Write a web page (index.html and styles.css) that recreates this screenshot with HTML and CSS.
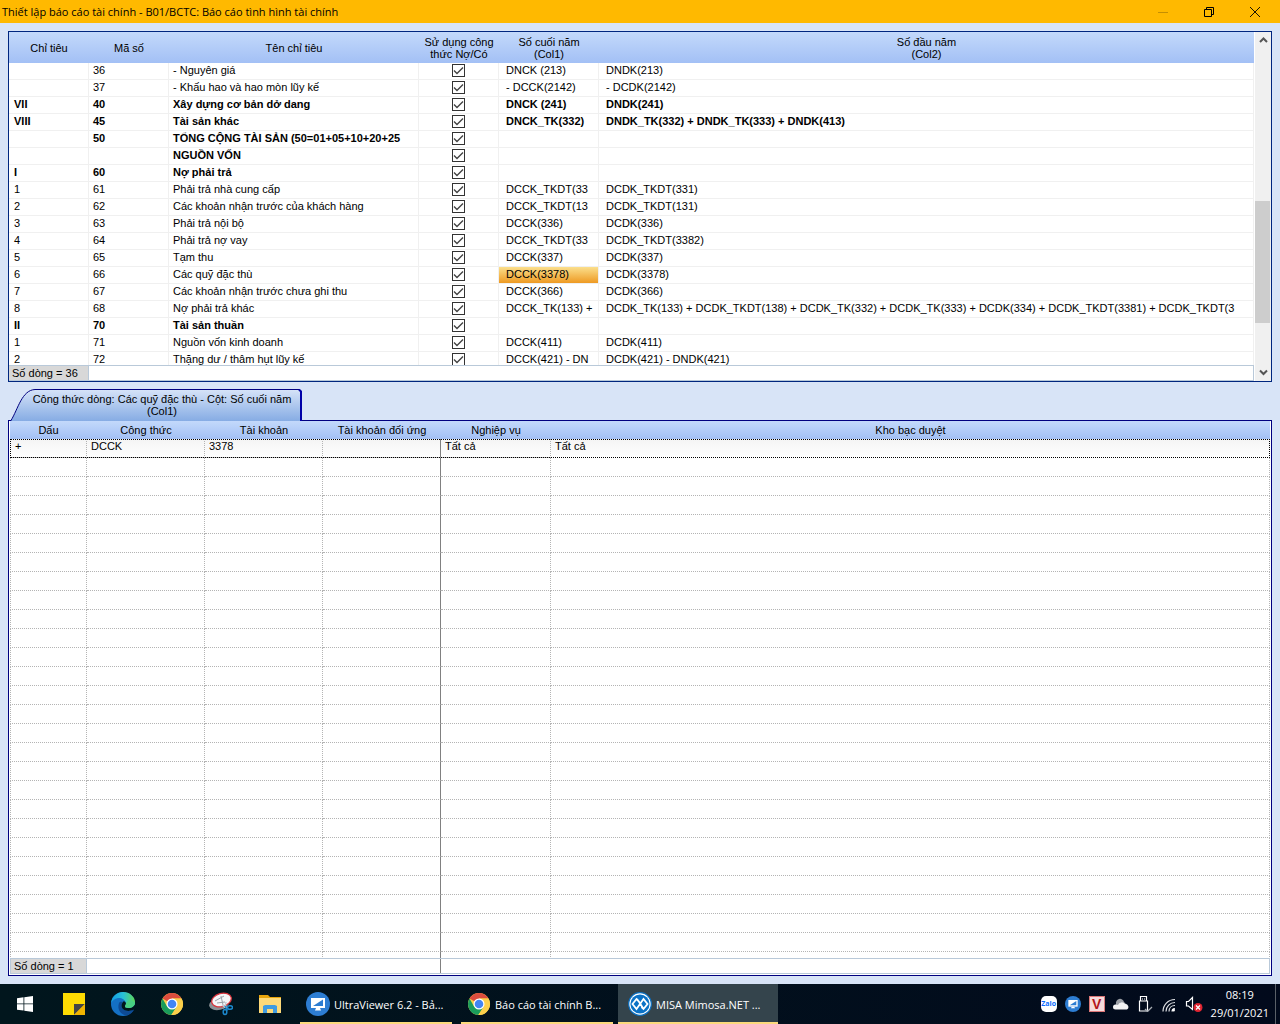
FILE: index.html
```html
<!DOCTYPE html>
<html lang="vi">
<head>
  <meta charset="UTF-8">
  <meta name="viewport" content="width=device-width, initial-scale=1.0">
  <title>Thiết lập báo cáo tài chính</title>
  <link rel="stylesheet" href="styles.css">
</head>
<body>
  <!-- Title bar -->
  <header class="titlebar">
    <h1>Thiết lập báo cáo tài chính - B01/BCTC: Báo cáo tình hình tài chính</h1>
    <div class="window-buttons">
      <button type="button" aria-label="Thu nhỏ" disabled><svg width="12" height="12" viewBox="0 0 12 12"><path d="M1 6.500h10" stroke="#c58f02"/></svg></button>
      <button type="button" aria-label="Khôi phục"><svg width="12" height="12" viewBox="0 0 12 12"><path d="M1.500 3.500h7v7h-7zM3.500 3.500v-2h7v7h-2" fill="none" stroke="#000"/></svg></button>
      <button type="button" aria-label="Đóng"><svg width="12" height="12" viewBox="0 0 12 12"><path d="M1 1l10 10M11 1L1 11" stroke="#000" stroke-width=".9"/></svg></button>
    </div>
  </header>

  <main class="workspace">
    <!-- Report lines -->
    <section class="panel lines-panel">
      <div class="lines-main">
        <div class="table-wrap">
          <table class="lines">
            <colgroup>
              <col class="c-index"><col class="c-code"><col class="c-name"><col class="c-check"><col class="c-col1"><col>
            </colgroup>
            <thead>
              <tr>
                <th>Chỉ tiêu</th>
                <th>Mã số</th>
                <th>Tên chỉ tiêu</th>
                <th>Sử dụng công<br>thức Nợ/Có</th>
                <th>Số cuối năm<br>(Col1)</th>
                <th>Số đầu năm<br>(Col2)</th>
              </tr>
            </thead>
            <tbody>
              <tr><td></td><td>36</td><td>- Nguyên giá</td><td><input type="checkbox" aria-label="36" checked></td><td>DNCK (213)</td><td>DNDK(213)</td></tr>
              <tr><td></td><td>37</td><td>- Khấu hao và hao mòn lũy kế</td><td><input type="checkbox" aria-label="37" checked></td><td>- DCCK(2142)</td><td>- DCDK(2142)</td></tr>
              <tr class="group"><td>VII</td><td>40</td><td>Xây dựng cơ bản dở dang</td><td><input type="checkbox" aria-label="40" checked></td><td>DNCK (241)</td><td>DNDK(241)</td></tr>
              <tr class="group"><td>VIII</td><td>45</td><td>Tài sản khác</td><td><input type="checkbox" aria-label="45" checked></td><td>DNCK_TK(332)</td><td>DNDK_TK(332) + DNDK_TK(333) + DNDK(413)</td></tr>
              <tr class="group"><td></td><td>50</td><td>TỔNG CỘNG TÀI SẢN (50=01+05+10+20+25</td><td><input type="checkbox" aria-label="50" checked></td><td></td><td></td></tr>
              <tr class="group"><td></td><td></td><td>NGUỒN VỐN</td><td><input type="checkbox" aria-label="Nguồn vốn" checked></td><td></td><td></td></tr>
              <tr class="group"><td>I</td><td>60</td><td>Nợ phải trả</td><td><input type="checkbox" aria-label="60" checked></td><td></td><td></td></tr>
              <tr><td>1</td><td>61</td><td>Phải trả nhà cung cấp</td><td><input type="checkbox" aria-label="61" checked></td><td>DCCK_TKDT(33</td><td>DCDK_TKDT(331)</td></tr>
              <tr><td>2</td><td>62</td><td>Các khoản nhận trước của khách hàng</td><td><input type="checkbox" aria-label="62" checked></td><td>DCCK_TKDT(13</td><td>DCDK_TKDT(131)</td></tr>
              <tr><td>3</td><td>63</td><td>Phải trả nội bộ</td><td><input type="checkbox" aria-label="63" checked></td><td>DCCK(336)</td><td>DCDK(336)</td></tr>
              <tr><td>4</td><td>64</td><td>Phải trả nợ vay</td><td><input type="checkbox" aria-label="64" checked></td><td>DCCK_TKDT(33</td><td>DCDK_TKDT(3382)</td></tr>
              <tr><td>5</td><td>65</td><td>Tạm thu</td><td><input type="checkbox" aria-label="65" checked></td><td>DCCK(337)</td><td>DCDK(337)</td></tr>
              <tr><td>6</td><td>66</td><td>Các quỹ đặc thù</td><td><input type="checkbox" aria-label="66" checked></td><td class="selected">DCCK(3378)</td><td>DCDK(3378)</td></tr>
              <tr><td>7</td><td>67</td><td>Các khoản nhận trước chưa ghi thu</td><td><input type="checkbox" aria-label="67" checked></td><td>DCCK(366)</td><td>DCDK(366)</td></tr>
              <tr><td>8</td><td>68</td><td>Nợ phải trả khác</td><td><input type="checkbox" aria-label="68" checked></td><td>DCCK_TK(133) +</td><td>DCDK_TK(133) + DCDK_TKDT(138) + DCDK_TK(332) + DCDK_TK(333) + DCDK(334) + DCDK_TKDT(3381) + DCDK_TKDT(3</td></tr>
              <tr class="group"><td>II</td><td>70</td><td>Tài sản thuần</td><td><input type="checkbox" aria-label="70" checked></td><td></td><td></td></tr>
              <tr><td>1</td><td>71</td><td>Nguồn vốn kinh doanh</td><td><input type="checkbox" aria-label="71" checked></td><td>DCCK(411)</td><td>DCDK(411)</td></tr>
              <tr><td>2</td><td>72</td><td>Thặng dư / thâm hụt lũy kế</td><td><input type="checkbox" aria-label="72" checked></td><td>DCCK(421) - DN</td><td>DCDK(421) - DNDK(421)</td></tr>
            </tbody>
          </table>
        </div>
        <div class="summary"><span>Số dòng = 36</span></div>
      </div>
      <div class="scrollbar">
        <button type="button" aria-label="Lên"><svg width="9" height="7" viewBox="0 0 9 7"><path d="M1 5l3.500-3.500L8 5" fill="none" stroke="#555" stroke-width="2"/></svg></button>
        <div class="track-before"></div>
        <div class="thumb"></div>
        <div class="track-after"></div>
        <button type="button" aria-label="Xuống"><svg width="9" height="7" viewBox="0 0 9 7"><path d="M1 1.500L4.500 5 8 1.500" fill="none" stroke="#555" stroke-width="2"/></svg></button>
      </div>
    </section>

    <!-- Formula details for the selected cell -->
    <button type="button" class="tab">
      <svg class="tab-shape" width="292" height="32" viewBox="0 0 292 32">
        <defs>
          <linearGradient id="tabFill" x1="0" y1="0" x2="0" y2="1">
            <stop offset="0" stop-color="#d6e3f8"/>
            <stop offset="1" stop-color="#86ace4"/>
          </linearGradient>
        </defs>
        <path d="M1 32C8 20 12 1 25 .500H289L291.500 3V32z" fill="url(#tabFill)"/>
        <path d="M1 31.500C8 20 12 1 25 .500H289.500" fill="none" stroke="#000080"/>
        <path d="M289 .500L291 2.500V32" fill="none" stroke="#0000a8" stroke-width="2"/>
      </svg>
      <span>Công thức dòng: Các quỹ đặc thù - Cột: Số cuối năm<br>(Col1)</span>
    </button>
    <section class="panel formula-panel">
      <div class="table-wrap">
        <table class="formula">
          <colgroup>
            <col class="c-sign"><col class="c-acc"><col class="c-acc"><col class="c-acc"><col class="c-biz"><col>
          </colgroup>
          <thead>
            <tr><th>Dấu</th><th>Công thức</th><th>Tài khoản</th><th>Tài khoản đối ứng</th><th>Nghiệp vụ</th><th>Kho bạc duyệt</th></tr>
          </thead>
          <tbody id="formula-rows">
            <tr class="current"><td>+</td><td>DCCK</td><td>3378</td><td></td><td>Tất cả</td><td>Tất cả</td></tr>
          </tbody>
        </table>
      </div>
      <div class="summary"><span>Số dòng = 1</span><i class="fixed-edge"></i></div>
    </section>
  </main>

  <!-- Taskbar -->
  <footer class="taskbar">
    <svg class="defs" width="0" height="0">
      <symbol id="chrome" viewBox="0 0 24 24">
        <circle cx="12" cy="12" r="11" fill="#f9cf45"/>
        <path d="M12 12L2.500 6.500A11 11 0 0 1 21.500 6.500H12z" fill="#dc4d3e"/>
        <path d="M2.500 6.500A11 11 0 0 0 11.300 23L16.800 14.800 12 12 7.200 14.800z" fill="#1a9c5b"/>
        <path d="M12 6.500h9.500A11 11 0 0 1 11.300 23L16.800 14.800z" fill="#fcd04b"/>
        <circle cx="12" cy="12" r="5.500" fill="#fff"/>
        <circle cx="12" cy="12" r="4.300" fill="#4285f4"/>
      </symbol>
      <symbol id="viewer" viewBox="0 0 24 24">
        <circle cx="12" cy="12" r="12" fill="#2d7dd2"/>
        <path d="M5 6h14v10H5z" fill="#fff"/>
        <path d="M7 14L17 7.500V14z" fill="#2d7dd2"/>
        <path d="M10 16h4l1 2.500H9z" fill="#fff"/>
      </symbol>
    </svg>

    <button type="button" class="pin" aria-label="Start"><svg width="16" height="16" viewBox="0 0 16 16"><path d="M0 2.300L6.500 1.300V7.500H0zM7.300 1.200L16 0v7.500H7.300zM0 8.300h6.500v6.300L0 13.700zM7.300 8.300H16V16l-8.700-1.200z" fill="#fff"/></svg></button>
    <button type="button" class="pin" aria-label="Sticky Notes"><svg width="22" height="22" viewBox="0 0 22 22"><path d="M0 0h22v22H0z" fill="#fedb02"/><path d="M11 22V11h11z" fill="#454545"/><path d="M11 22L22 11v11z" fill="#f0b400"/></svg></button>
    <button type="button" class="pin" aria-label="Edge">
      <svg width="24" height="24" viewBox="0 0 24 24">
        <defs>
          <linearGradient id="edgeTop" x1="0" y1="0" x2="1" y2="0"><stop offset="0" stop-color="#129ce2"/><stop offset=".5" stop-color="#28c0d8"/><stop offset="1" stop-color="#5fd854"/></linearGradient>
        </defs>
        <circle cx="12" cy="12" r="12" fill="#1470c4"/>
        <path d="M0 11C1 4 6 0 12 0c7 0 12 5 12 10 0 4-3 6-6.500 6-2.500 0-4-1-3.500-2 1-1 1-2 1-3C14 7 10 5.500 7 6 3.500 6.500 1 9 0 11z" fill="url(#edgeTop)"/>
        <path d="M8 11c-2 6 1 11 7 12.500 4-.5 7-3.500 8-6-6 3-12 1-12.500-3.500-.1-1.500.5-3 1.500-4-2-.5-3.500 0-4 1z" fill="#0d4a94"/>
        <path d="M15 11c0 1-.2 2-1 3-.5 1 1 2 3.500 2 2.500 0 5-1 6.500-3.500V16l-1 1.500c-6 3-12 1-12.500-3.500C10.500 12 11.500 10 13 9z" fill="#01151c"/>
        <path d="M14 14c-.5 1 1 2 3.500 2 3.500 0 6.500-2 6.500-6l-6-2-3 3c0 1-.3 2-1 3z" fill="#48cf83"/>
      </svg>
    </button>
    <button type="button" class="pin" aria-label="Chrome"><svg width="24" height="24"><use href="#chrome"/></svg></button>
    <button type="button" class="pin" aria-label="Snipping Tool">
      <svg width="24" height="24" viewBox="0 0 24 24">
        <ellipse cx="10" cy="12" rx="10" ry="6" fill="#8b9095" transform="rotate(-12 10 12)"/>
        <ellipse cx="12.500" cy="8" rx="10" ry="6.500" fill="#f5f6f8" stroke="#d9343c" stroke-width="1.300" transform="rotate(-15 12.500 8)"/>
        <path d="M6 9l9-5M8 11l8-1M12 4l2 9" stroke="#9aa1a8" fill="none"/>
        <path d="M13 13l5 3M17 10l-1 6" stroke="#c5ccd2" stroke-width="1.500"/>
        <ellipse cx="21" cy="15.500" rx="2.500" ry="1.800" fill="none" stroke="#1b87cc" stroke-width="1.500"/>
        <ellipse cx="16" cy="20" rx="1.800" ry="2.500" fill="none" stroke="#1b87cc" stroke-width="1.500"/>
        <path d="M16 14l2.500 4.500" stroke="#1b87cc" stroke-width="1.500"/>
      </svg>
    </button>
    <button type="button" class="pin" aria-label="File Explorer">
      <svg width="22" height="18" viewBox="0 0 22 18">
        <path d="M0 0h9l2 2h11v16H0z" fill="#e8a50c"/>
        <path d="M0 3h22v15H0z" fill="#fdd978"/>
        <path d="M4 18v-7l2-1h10l2 1v7h-4v-4H8v4z" fill="#3f9be0"/>
      </svg>
    </button>

    <div class="tasks">
      <button type="button" class="task"><svg width="24" height="24"><use href="#viewer"/></svg>UltraViewer 6.2 - Bả...</button>
      <button type="button" class="task"><svg width="24" height="24"><use href="#chrome"/></svg>Báo cáo tài chính B...</button>
      <button type="button" class="task active">
        <svg width="24" height="24" viewBox="0 0 24 24">
          <circle cx="12" cy="12" r="11.300" fill="#fff" stroke="#0b6fc0" stroke-width="1.200"/>
          <circle cx="12" cy="12" r="9.600" fill="#0b72c6"/>
          <path d="M10.500 9L8.500 7 4.500 12l4 5 7-10 4 5-4 5-2-2M10.500 9l5 8M8.500 7l2 2" fill="none" stroke="#fff" stroke-width="1.800"/>
        </svg>MISA Mimosa.NET ...</button>
    </div>

    <div class="tray">
      <span class="zalo">Zalo</span>
      <svg width="16" height="16"><use href="#viewer"/></svg>
      <span class="vkey">V</span>
      <svg width="16" height="16" viewBox="0 0 16 16"><path d="M3 8a4 4 0 0 1 8-2l3 3-5 3H2z" fill="#9b9fa5"/><path d="M2.500 13.500a2.500 2.500 0 0 1 0-5L5 9a4 4 0 0 1 7-1 3 3 0 0 1 2 5.500z" fill="#f3f3f3"/></svg>
      <svg width="16" height="16" viewBox="0 0 16 16"><path d="M3.500 5V.500h6V5M2.500 5h8v10h-8zM5 3h1M7 3h1" fill="none" stroke="#fff" stroke-width="1.200"/><path d="M8 13l2.500 2.500L15 11" fill="none" stroke="#a6abb2" stroke-width="1.300"/></svg>
      <svg width="16" height="16" viewBox="0 0 16 16"><g fill="none" stroke="#dfe1e4" stroke-width="1.200"><path d="M2 15.500C2 9 7 3.500 14 3.500M5 15.500c0-5 4-9 9-9M8 15.500c0-3.500 2.500-6 6-6M11 15.500c0-1.500 1-3 3-3"/></g><circle cx="12.500" cy="14" r="1.500" fill="#fff"/></svg>
      <svg width="18" height="16" viewBox="0 0 18 16"><path d="M1.500 5.500h2l4-4v12l-4-3.500h-2z" fill="none" stroke="#fff" stroke-width="1.200"/><circle cx="13" cy="11.500" r="4.500" fill="#e02430"/><path d="M11 9.500l4 4M15 9.500l-4 4" stroke="#fff" stroke-width="1.200"/></svg>
    </div>
    <div class="clock"><time>08:19</time><time>29/01/2021</time></div>
  </footer>

  <script src="script.js"></script>
</body>
</html>
```
FILE: styles.css
```css
* {
  box-sizing: border-box;
}

body {
  margin: 0;
  height: 100vh;
  display: flex;
  flex-direction: column;
  overflow: hidden;
  background: #d8e4f7;
  color: #000;
  font-family: "Liberation Sans", Arial, sans-serif;
  font-size: 11px;
}

button {
  margin: 0;
  padding: 0;
  border: none;
  background: none;
  color: inherit;
  font: inherit;
}

/* Title bar */
.titlebar {
  flex: none;
  height: 23px;
  display: flex;
  align-items: center;
  justify-content: space-between;
  padding: 0 2px;
  background: #ffb900;
}

.titlebar h1 {
  margin: 0;
  font-family: "Open Sans", sans-serif;
  font-size: 11px;
  font-weight: 400;
}

.window-buttons {
  display: flex;
}

.window-buttons button {
  width: 46px;
  height: 20px;
  display: flex;
  align-items: center;
  justify-content: center;
}

/* Work area */
.workspace {
  flex: 1;
  min-height: 0;
  display: flex;
  flex-direction: column;
  padding: 8px;
}

.panel {
  border: 1px solid #00267f;
  background: #fff;
}

.table-wrap {
  flex: 1;
  min-height: 0;
  overflow: hidden;
}

table {
  width: 100%;
  table-layout: fixed;
  border-collapse: separate;
  border-spacing: 0;
}

th {
  padding: 0;
  font-weight: 400;
  line-height: 12px;
}

td {
  padding: 0 0 1px 7px;
  overflow: hidden;
  white-space: nowrap;
  line-height: 15px;
}

thead tr {
  background: linear-gradient(#c3d9fb, #a3c0f5);
}

/* Report lines grid */
.lines-panel {
  flex: none;
  height: 351px;
  display: flex;
}

.lines-main {
  flex: 1;
  min-width: 0;
  display: flex;
  flex-direction: column;
}

.c-index { width: 80px; }
.c-code { width: 80px; }
.c-name { width: 250px; }
.c-check { width: 80px; }
.c-col1 { width: 100px; }

.lines th {
  height: 31px;
}

.lines td {
  height: 17px;
  border-right: 1px solid #f0f0f0;
  border-bottom: 1px solid #f0f0f0;
  padding-left: 4px;
}

.lines td:first-child {
  padding-left: 5px;
}

.lines td:nth-child(n+5) {
  padding-left: 7px;
}

.lines td:nth-child(4) {
  padding: 0;
  text-align: center;
}

.group td {
  font-weight: 700;
}

.lines .selected {
  background: linear-gradient(#fbdf8c, #ee9a23);
}

input[type="checkbox"] {
  appearance: none;
  display: block;
  width: 13px;
  height: 13px;
  margin: 0 auto 1px;
  border: 1px solid #333;
  background: #fff;
}

input[type="checkbox"]:checked {
  background: #fff url("data:image/svg+xml,%3Csvg xmlns='http://www.w3.org/2000/svg' viewBox='0 0 11 11'%3E%3Cpath d='M1 5.500l3 3L10 2.500' fill='none' stroke='%23444' stroke-width='1.400'/%3E%3C/svg%3E");
}

.summary {
  flex: none;
  display: flex;
  height: 16px;
  border: 1px solid #b9c9d9;
  border-left: none;
}

.summary span {
  width: 80px;
  padding-left: 3px;
  border-right: 1px solid #b9c9d9;
  background: #d8d8d8;
  line-height: 14px;
}

/* Scrollbar */
.scrollbar {
  flex: none;
  width: 17px;
  display: flex;
  flex-direction: column;
  border-left: 1px solid #fff;
  background: #f0f0f0;
}

.scrollbar button {
  height: 17px;
  display: flex;
  align-items: center;
  justify-content: center;
}

.track-before { flex: 152; }
.thumb { flex: 122; margin-right: 1px; background: #cdcdcd; }
.track-after { flex: 41; }

/* Tab above the formula grid */
.tab {
  position: relative;
  flex: none;
  width: 292px;
  height: 31px;
  margin: 7px 0 0 2px;
  padding: 0 8px 0 20px;
  line-height: 12px;
  white-space: nowrap;
}

.tab-shape {
  position: absolute;
  top: 0;
  left: 0;
}

.tab span {
  position: relative;
}

/* Formula grid */
.formula-panel {
  flex: 1;
  min-height: 0;
  display: flex;
  flex-direction: column;
  padding: 0 1px 1px;
  border-color: #000080;
}

.c-sign { width: 77px; }
.c-acc { width: 118px; }
.c-biz { width: 110px; }

.formula th {
  height: 18px;
}

.formula td {
  height: 19px;
  padding: 0 0 3px 4px;
  border-right: 1px dotted #b4b4b4;
  border-bottom: 1px dotted #b4b4b4;
}

.formula td:first-child {
  border-left: 1px dotted #b4b4b4;
}

.formula td:nth-child(4) {
  border-right: 1px solid #808080;
}

.formula .current {
  background: linear-gradient(#f4f4f4, #fff);
  outline: 1px dotted #000;
  outline-offset: -1px;
}

.formula-panel .summary {
  border-left: 1px solid #b9c9d9;
}

.formula-panel .summary span {
  width: 76px;
}

.fixed-edge {
  width: 354px;
  border-right: 1px solid #808080;
}

/* Taskbar */
.taskbar {
  flex: none;
  height: 40px;
  display: flex;
  align-items: center;
  background: linear-gradient(90deg, #01161d, #020a1c);
  color: #fff;
  font-family: "Open Sans", sans-serif;
}

.defs {
  position: absolute;
}

.pin {
  width: 49px;
  height: 40px;
  display: flex;
  align-items: center;
  justify-content: center;
}

.tasks {
  flex: 1;
  display: flex;
  gap: 9px;
  margin-left: 6px;
}

.task {
  width: 152px;
  height: 40px;
  display: flex;
  align-items: center;
  gap: 4px;
  padding: 2px 6px 0;
  border-bottom: 2px solid #fcd97c;
  white-space: nowrap;
}

.task svg {
  flex: none;
}

.task.active {
  width: 160px;
  margin-left: -4px;
  padding-left: 10px;
  background: #34444c;
}

.tray {
  display: flex;
  align-items: center;
  gap: 8px;
  margin-right: 8px;
}

.zalo {
  width: 16px;
  height: 16px;
  border-radius: 5px;
  background: #fff;
  color: #0a6cff;
  font-size: 7px;
  font-weight: 700;
  line-height: 15px;
  text-align: center;
}

.vkey {
  width: 16px;
  height: 16px;
  border: 1px solid #d77;
  background: #f6dcdc;
  color: #b3161b;
  font-family: "Liberation Sans", sans-serif;
  font-size: 14px;
  font-weight: 700;
  line-height: 14px;
  text-align: center;
}

.clock {
  display: flex;
  flex-direction: column;
  align-items: center;
  margin-right: 4px;
  padding-right: 6px;
  border-right: 1px solid #5a6068;
  height: 40px;
  justify-content: center;
  line-height: 18px;
}
```
FILE: script.js
```js
// Fill the rest of the formula grid with blank rows
const formulaRows = document.getElementById('formula-rows');

for (let i = 0; i < 27; i++) {
  const row = formulaRows.insertRow();
  for (let c = 0; c < 6; c++) {
    row.insertCell();
  }
}
```
